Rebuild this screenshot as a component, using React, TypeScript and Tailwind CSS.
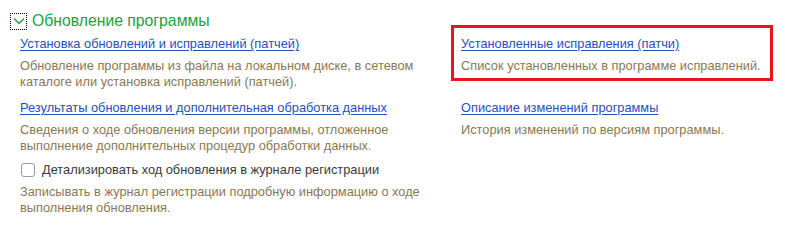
import React from "react";

type Item = {
  title: string;
  text: string;
};

const leftItems: Item[] = [
  {
    title: "Установка обновлений и исправлений (патчей)",
    text: "Обновление программы из файла на локальном диске, в сетевом каталоге или установка исправлений (патчей).",
  },
  {
    title: "Результаты обновления и дополнительная обработка данных",
    text: "Сведения о ходе обновления версии программы, отложенное выполнение дополнительных процедур обработки данных.",
  },
];

const rightItems: Item[] = [
  {
    title: "Установленные исправления (патчи)",
    text: "Список установленных в программе исправлений.",
  },
  {
    title: "Описание изменений программы",
    text: "История изменений по версиям программы.",
  },
];

function LinkItem({ item, highlight = false }: { item: Item; highlight?: boolean }) {
  return (
    <div className="relative flex flex-col gap-[6px]">
      {highlight ? (
        <div className="pointer-events-none absolute left-[-10px] top-[-11px] h-[56px] w-[322px] border-[3px] border-[#e8141e]" />
      ) : null}
      <a href="#" className="w-fit text-[12.8px] leading-4 text-[#1f4fc0] underline underline-offset-[2px]">
        {item.title}
      </a>
      <p className="text-[12.8px] leading-4 text-[#8a7852]">{item.text}</p>
    </div>
  );
}

export default function App() {
  return (
    <div className="h-[227px] w-[785px] bg-white font-['Liberation_Sans',Arial,sans-serif]">
      <div className="flex items-center gap-[5px] pl-[10px] pt-[11px]">
        <button
          type="button"
          className="flex h-[17px] w-[17px] items-center justify-center border border-dotted border-black"
        >
          <svg width="12" height="8" viewBox="0 0 12 8" fill="none">
            <path d="M1 1.5 6 6.5 11 1.5" stroke="#23a03c" strokeWidth="1.4" />
          </svg>
        </button>
        <span className="text-[15.75px] leading-5 text-[#23a03c]">Обновление программы</span>
      </div>

      <div className="grid grid-cols-[420px_1fr] gap-x-[21px] gap-y-[10px] pl-[20px] pt-[5px]">
        <LinkItem item={leftItems[0]} />
        <LinkItem item={rightItems[0]} highlight />
        <LinkItem item={leftItems[1]} />
        <LinkItem item={rightItems[1]} />
      </div>

      <div className="flex flex-col gap-[6px] pl-[20px] pt-[8px]">
        <label className="flex items-center gap-[7px]">
          <span className="ml-px h-[14px] w-[14px] rounded-[3px] border border-[#9a9a9a] bg-white" />
          <span className="text-[12.8px] leading-4 text-[#3a3a3a]">
            Детализировать ход обновления в журнале регистрации
          </span>
        </label>
        <p className="w-[420px] text-[12.8px] leading-4 text-[#8a7852]">
          Записывать в журнал регистрации подробную информацию о ходе выполнения обновления.
        </p>
      </div>
    </div>
  );
}
